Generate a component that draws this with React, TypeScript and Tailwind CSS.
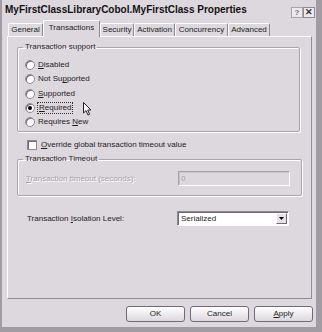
import React from 'react';

const tabs = ['General', 'Transactions', 'Security', 'Activation', 'Concurrency', 'Advanced'];
const tabWidths: Record<string, string> = {
  General: 'w-[35px]',
  Transactions: 'w-[57px]',
  Security: 'w-[34px]',
  Activation: 'w-[41px]',
  Concurrency: 'w-[53px]',
  Advanced: 'w-[42px]',
};

const Radio = ({ checked }: { checked?: boolean }) => (
  <span className="w-[10px] h-[10px] rounded-full bg-white border border-[#8d8891] flex items-center justify-center shadow-[inset_1px_1px_0_#6f6a73]">
    {checked && <span className="w-[4px] h-[4px] rounded-full bg-black" />}
  </span>
);

const Btn = ({ children }: { children: React.ReactNode }) => (
  <button className="w-[59px] h-[16px] rounded-[3px] border border-[#6f6b74] bg-gradient-to-b from-white to-[#dcd8de] text-[8px] leading-none text-[#1c1c1c] flex items-center justify-center">
    {children}
  </button>
);

const App: React.FC = () => {
  const radios = [
    { label: <><u>D</u>isabled</> },
    { label: <>Not Su<u>p</u>ported</> },
    { label: <><u>S</u>upported</> },
    { label: <><u>R</u>equired</>, checked: true },
    { label: <>Requires <u>N</u>ew</> },
  ];

  return (
    <div className="w-[322px] h-[332px] bg-[#ddd8de] border-l-2 border-r-[6px] border-b-[5px] border-[#a19ba4] flex flex-col font-['Liberation_Sans',sans-serif] text-[#1c1c1c] overflow-hidden">
      {/* title bar */}
      <div className="h-[20px] flex items-center pl-[3px] pr-px">
        <span className="text-[10px] font-bold leading-none text-[#111]">MyFirstClassLibraryCobol.MyFirstClass Properties</span>
        <div className="ml-auto flex mt-[5px]">
          <span className="w-[12px] h-[11px] border border-[#a9a4ac] bg-[#ece9ee] text-[8px] font-bold leading-[9px] text-center text-[#777]">?</span>
          <span className="w-[12px] h-[11px] border border-[#8f8a93] bg-[#ece9ee] text-[9px] font-bold leading-[9px] text-center text-[#333]">✕</span>
        </div>
      </div>

      {/* tabs */}
      <div className="h-[16px] flex items-end pl-[6px]">
        {tabs.map((t) =>
          t === 'Transactions' ? (
            <div
              key={t}
              className={`${tabWidths[t]} h-[17px] -mb-px relative z-10 bg-[#ddd8de] border-t border-l border-white border-r border-r-[#8c8790] rounded-t-[2px] flex items-start justify-center pt-[2px] text-[8px] leading-[10px]`}
            >
              {t}
            </div>
          ) : (
            <div
              key={t}
              className={`${tabWidths[t]} h-[13px] border-t border-l border-white border-r border-r-[#8c8790] rounded-t-[2px] flex items-center justify-center text-[8px] leading-none`}
            >
              {t}
            </div>
          )
        )}
      </div>

      {/* panel */}
      <div className="ml-[5px] w-[305px] h-[263px] border-t border-l border-white border-r border-b border-r-[#8f8a93] border-b-[#8f8a93] flex flex-col text-[8px]">
        <fieldset className="ml-[9px] mt-[5px] w-[283px] h-[90px] border border-[#aaa5ad] shadow-[inset_1px_1px_0_#fff,1px_1px_0_#fff] rounded-[2px]">
          <legend className="ml-[5px] px-[2px] leading-[10px]">Transaction support</legend>
          <div className="flex flex-col pl-[7px] pt-[6px]">
            {radios.map((r, i) => (
              <div key={i} className="h-[14.25px] flex items-center gap-[3px] relative">
                <Radio checked={r.checked} />
                {r.checked ? (
                  <span className="border border-dotted border-[#333] px-px leading-[10px] -ml-px">{r.label}</span>
                ) : (
                  <span className="leading-[10px]">{r.label}</span>
                )}
                {r.checked && (
                  <svg className="absolute left-[58px] top-[1px]" width="9" height="14" viewBox="0 0 9 14">
                    <path d="M0.5 0.5 L0.5 11 L3 8.6 L5 13 L6.6 12.3 L4.7 8 L8 8 Z" fill="#fff" stroke="#222" strokeWidth="1" strokeLinejoin="round" />
                  </svg>
                )}
              </div>
            ))}
          </div>
        </fieldset>

        <div className="mt-[8px] ml-[19px] h-[10px] flex items-center gap-[4px]">
          <span className="w-[10px] h-[10px] bg-white border border-[#8d8891] shadow-[inset_1px_1px_0_#6f6a73]" />
          <span className="leading-none"><u>O</u>verride global transaction timeout value</span>
        </div>

        <fieldset className="ml-[9px] mt-[4px] w-[285px] h-[42px] border border-[#aaa5ad] shadow-[inset_1px_1px_0_#fff,1px_1px_0_#fff] rounded-[2px]">
          <legend className="ml-[5px] px-[2px] leading-[10px]">Transaction Timeout</legend>
          <div className="flex items-center justify-between pl-[8px] pr-[11px] pt-[7px]">
            <span className="text-[#a8a3ab] [text-shadow:1px_1px_0_#fff] leading-none">
              <u>T</u>ransaction timeout (seconds):
            </span>
            <div className="w-[112px] h-[15px] border border-[#a7a2aa] border-b-white border-r-white shadow-[inset_1px_1px_0_#c9c4cc] bg-[#ddd8de] text-[#a8a3ab] leading-[13px] pl-[2px]">
              0
            </div>
          </div>
        </fieldset>

        <div className="mt-[15px] ml-[19px] flex items-center">
          <span className="w-[150px] leading-none">
            Transaction <u>I</u>solation Level:
          </span>
          <div className="w-[112px] h-[15px] bg-white border border-[#8d8891] border-b-white border-r-white shadow-[inset_1px_1px_0_#6f6a73] flex items-center pl-[3px] pr-px">
            <span className="leading-none">Serialized</span>
            <span className="ml-auto w-[11px] h-[11px] bg-[#e6e2e8] border border-white border-r-[#6f6a73] border-b-[#6f6a73] flex items-center justify-center">
              <svg width="5" height="3" viewBox="0 0 5 3">
                <path d="M0 0 L5 0 L2.5 3 Z" fill="#000" />
              </svg>
            </span>
          </div>
        </div>
      </div>

      {/* buttons */}
      <div className="mt-[7px] flex justify-end gap-[5px] pr-[3px]">
        <Btn>OK</Btn>
        <Btn>Cancel</Btn>
        <Btn><u>A</u>pply</Btn>
      </div>
    </div>
  );
};

export default App;
